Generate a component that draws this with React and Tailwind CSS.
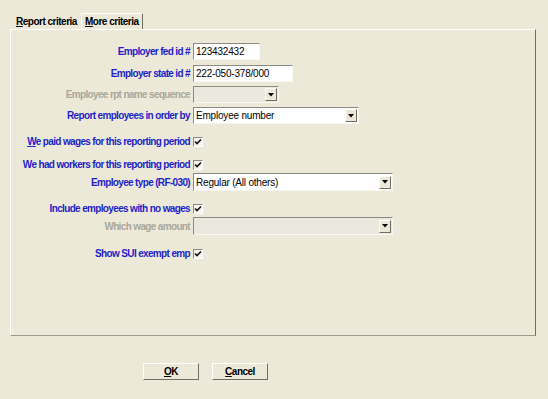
import React from "react";

const Check = () => (
  <span className="flex h-[10px] w-[10px] items-center justify-center border border-t-[#8c8a80] border-l-[#8c8a80] border-b-white border-r-white bg-[#f4f3ee]">
    <svg width="8" height="8" viewBox="0 0 8 8">
      <path d="M1 3.5 L3 5.5 L7 1.5" fill="none" stroke="#111" strokeWidth="1.6" />
    </svg>
  </span>
);

const Arrow = () => (
  <span className="ml-auto mr-[1px] flex h-[13px] w-[12px] items-center justify-center border border-t-white border-l-white border-b-[#716f64] border-r-[#716f64] bg-[#ece9d8]">
    <svg width="6" height="4" viewBox="0 0 6 4">
      <path d="M0 0 H6 L3 3.5 Z" fill="#000" />
    </svg>
  </span>
);

const Field = ({ w, value, disabled, select }) => (
  <div
    className={
      "flex h-full items-center border border-t-[#8c8a80] border-l-[#8c8a80] border-b-[#f8f7f2] border-r-[#f8f7f2] pl-[2px] text-[10px] tracking-[-0.2px] text-black " +
      (disabled ? "bg-[#ebe9df] " : "bg-white ") +
      w
    }
  >
    <span>{value}</span>
    {select && <Arrow />}
  </div>
);

const Row = ({ label, dim, mt, h, children }) => (
  <div className={"flex items-center " + mt + " " + h}>
    <div
      className={
        "w-[182px] shrink-0 pr-[3px] text-right text-[10px] font-bold tracking-[-0.65px] " +
        (dim ? "text-[#aaa79b]" : "text-[#1f1fc8]")
      }
    >
      {label}
    </div>
    {children}
  </div>
);

export default function App() {
  return (
    <div
      className="h-[399px] w-[548px] bg-[#ece9d8] pt-[13px]"
      style={{ fontFamily: '"Liberation Sans", Arial, sans-serif' }}
    >
      <div className="flex pl-[14px] text-[10px] font-bold tracking-[-0.5px] text-black">
        <div className="flex h-[16px] w-[67px] items-center pl-[2px]">
          <span>
            <span className="underline">R</span>eport criteria
          </span>
        </div>
        <div className="flex h-[16px] w-[62px] items-center border border-t-white border-l-white border-r-[#716f64] border-b-0 pl-[3px]">
          <span>
            <span className="underline">M</span>ore criteria
          </span>
        </div>
      </div>

      <div className="ml-[10px] h-[307px] w-[526px] border border-t-white border-l-white border-b-[#9d9a8c] border-r-[#716f64] pt-[13px]">
        <Row label="Employer fed id #" mt="" h="h-[17px]">
          <Field w="w-[67px]" value="123432432" />
        </Row>
        <Row label="Employer state id #" mt="mt-[5px]" h="h-[17px]">
          <Field w="w-[100px]" value="222-050-378/000" />
        </Row>
        <Row label="Employee rpt name sequence" dim mt="mt-[4px]" h="h-[17px]">
          <Field w="w-[86px]" value="" disabled select />
        </Row>
        <Row label="Report employees in order by" mt="mt-[4px]" h="h-[17px]">
          <Field w="w-[166px]" value="Employee number" select />
        </Row>
        <Row
          label={
            <>
              <span className="underline">W</span>e paid wages for this reporting period
            </>
          }
          mt="mt-[9px]"
          h="h-[17px]"
        >
          <Check />
        </Row>
        <Row label="We had workers for this reporting period" mt="mt-[6px]" h="h-[17px]">
          <Check />
        </Row>
        <Row label="Employee type (RF-030)" mt="" h="h-[18px]">
          <Field w="w-[200px]" value="Regular (All others)" select />
        </Row>
        <Row label="Include employees with no wages" mt="mt-[9px]" h="h-[17px]">
          <Check />
        </Row>
        <Row label="Which wage amount" dim mt="" h="h-[18px]">
          <Field w="w-[200px]" value="" disabled select />
        </Row>
        <Row label="Show SUI exempt emp" mt="mt-[10px]" h="h-[17px]">
          <Check />
        </Row>
      </div>

      <div className="mt-[27px] flex gap-[13px] pl-[143px]">
        <button className="flex h-[17px] w-[56px] items-center justify-center border border-t-white border-l-white border-b-[#716f64] border-r-[#716f64] bg-[#ece9d8] text-[10px] font-bold tracking-[-0.5px] text-black">
          <span>
            <span className="underline">O</span>K
          </span>
        </button>
        <button className="flex h-[17px] w-[56px] items-center justify-center border border-t-white border-l-white border-b-[#716f64] border-r-[#716f64] bg-[#ece9d8] text-[10px] font-bold tracking-[-0.5px] text-black">
          <span>
            <span className="underline">C</span>ancel
          </span>
        </button>
      </div>
    </div>
  );
}
